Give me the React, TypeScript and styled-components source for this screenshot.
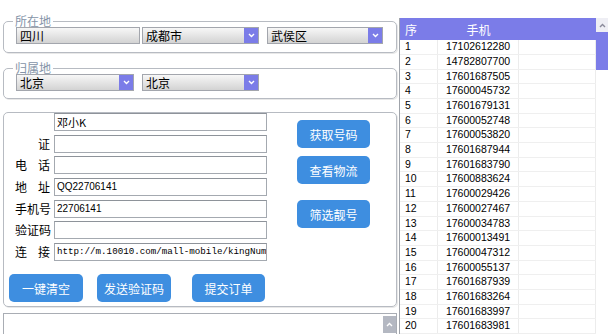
import React from "react";
import styled, { createGlobalStyle } from "styled-components";

const Global = createGlobalStyle`
  html, body { margin: 0; padding: 0; background: #fff; }
  body { font-family: "Noto Sans CJK SC", "Liberation Sans", sans-serif; font-size: 12px; color: #000; }
`;

const Page = styled.div`
  width: 608px;
  height: 334px;
  display: flex;
  overflow: hidden;
  background: #fff;
`;

const LeftPane = styled.div`
  width: 399px;
  flex: none;
  display: flex;
  flex-direction: column;
`;

const GroupBox = styled.fieldset<{ $mt: number; $pb: number }>`
  margin: ${(p) => p.$mt}px 0 0 3px;
  width: 394px;
  box-sizing: border-box;
  border: 1px solid #b7bbc2;
  border-radius: 5px;
  padding: 1px 0 ${(p) => p.$pb}px 12px;
  box-shadow: 1px 1px 0 #e8e8e8;
  min-width: 0;
`;

const Legend = styled.legend`
  font-size: 12px;
  line-height: 10px;
  color: #8594a8;
  padding: 0 2px;
  margin-left: -3px;
`;

const ComboRow = styled.div`
  display: flex;
  gap: 8px;
`;

const Combo = styled.div<{ $w: number; $mr?: number }>`
  width: ${(p) => p.$w}px;
  margin-right: ${(p) => p.$mr ?? 0}px;
  height: 17px;
  box-sizing: border-box;
  border: 1px solid #a3a6ad;
  background: linear-gradient(#f7f7f7, #d3d3d3);
  display: flex;
  align-items: stretch;
`;

const ComboText = styled.span`
  flex: 1;
  padding-left: 3px;
  font-size: 12px;
  line-height: 15px;
  white-space: nowrap;
  overflow: hidden;
`;

const ComboArrow = styled.span`
  width: 14px;
  flex: none;
  background: #7b7ce8;
  display: flex;
  align-items: center;
  justify-content: center;
`;

const FormBox = styled.div`
  margin: 13px 0 0 3px;
  width: 394px;
  box-sizing: border-box;
  border: 1px solid #b7bbc2;
  border-radius: 5px;
  box-shadow: 1px 1px 0 #e8e8e8;
  padding: 0 0 4px 6px;
  display: flex;
  flex-direction: column;
`;

const FormTop = styled.div`
  display: flex;
  align-items: flex-start;
`;

const Fields = styled.div`
  margin-left: 5px;
  display: flex;
  flex-direction: column;
  gap: 3.7px;
`;

const FieldRow = styled.div`
  display: flex;
  align-items: center;
  gap: 4px;
  height: 18px;
`;

const Label = styled.span<{ $right?: boolean }>`
  width: 35px;
  font-size: 12px;
  line-height: 14px;
  white-space: nowrap;
  text-align: ${(p) => (p.$right ? "right" : "justify")};
  text-align-last: ${(p) => (p.$right ? "right" : "justify")};
`;

const TextBox = styled.div<{ $kind?: "mono" | "sans" | "cjk" }>`
  width: 213px;
  height: 18px;
  box-sizing: border-box;
  border: 1px solid #a4a9b0;
  border-top-color: #8e939a;
  background: #fff;
  padding-left: 2px;
  font-family: ${(p) =>
    p.$kind === "mono"
      ? `"Liberation Mono", monospace`
      : p.$kind === "sans"
      ? `"Liberation Sans", Arial, sans-serif`
      : `"Noto Sans CJK SC", sans-serif`};
  font-size: ${(p) => (p.$kind === "mono" ? "9.2px" : p.$kind === "sans" ? "10px" : "11px")};
  line-height: 16px;
  white-space: nowrap;
  overflow: hidden;
`;

const SideButtons = styled.div`
  margin-left: 30px;
  padding-top: 7px;
  display: flex;
  flex-direction: column;
`;

const BlueButton = styled.button<{ $mt?: number; $ml?: number; $w?: number }>`
  margin: ${(p) => p.$mt ?? 0}px 0 0 ${(p) => p.$ml ?? 0}px;
  width: ${(p) => p.$w ?? 73}px;
  height: 28px;
  border: none;
  border-radius: 5px;
  background: #3e8ee0;
  color: #fff;
  font-family: "Noto Sans CJK SC", sans-serif;
  font-size: 12px;
  padding: 0;
  cursor: pointer;
`;

const BottomButtons = styled.div`
  display: flex;
  margin-top: 13px;
  margin-left: -1px;
`;

const LogPanel = styled.div`
  margin: 6px 0 0 3px;
  width: 394px;
  flex: 1;
  box-sizing: border-box;
  border: 1px solid #a9adb4;
  border-bottom: none;
  display: flex;
  justify-content: flex-end;
`;

const ScrollUp = styled.div`
  width: 13px;
  height: 17px;
  margin-top: 2px;
  background: #b4b8c2;
  display: flex;
  align-items: center;
  justify-content: center;
`;

const TablePane = styled.div`
  width: 209px;
  flex: none;
  padding-top: 18px;
  display: flex;
`;

const Grid = styled.div`
  width: 196px;
  border-left: 1px solid #9fa3aa;
  display: flex;
  flex-direction: column;
`;

const HeaderRow = styled.div`
  height: 24px;
  background: #7b7ce8;
  display: grid;
  grid-template-columns: 38px 81px 1fr;
  align-items: center;
  color: #fff;
  font-size: 12px;
`;

const HeadCell = styled.span<{ $center?: boolean }>`
  padding-left: ${(p) => (p.$center ? 0 : 5)}px;
  text-align: ${(p) => (p.$center ? "center" : "left")};
`;

const BodyRow = styled.div`
  height: 14.7px;
  box-sizing: border-box;
  display: grid;
  grid-template-columns: 38px 81px 1fr;
  border-bottom: 1px solid #efefef;
  font-family: "Liberation Sans", Arial, sans-serif;
  font-size: 10.5px;
  line-height: 13.7px;
`;

const Cell = styled.span<{ $center?: boolean }>`
  border-right: 1px solid #ececec;
  padding-left: ${(p) => (p.$center ? 0 : 5)}px;
  text-align: ${(p) => (p.$center ? "center" : "left")};
`;

const VScroll = styled.div`
  width: 12px;
  display: flex;
  flex-direction: column;
`;

const ScrollArrowBtn = styled.div`
  height: 14px;
  background: #eeeef4;
  display: flex;
  align-items: center;
  justify-content: center;
`;

const ScrollThumb = styled.div`
  height: 38px;
  background: #7b7ce8;
`;

const Chevron = ({ up, color }: { up?: boolean; color: string }) => (
  <svg width="7" height="5" viewBox="0 0 7 5">
    <path
      d={up ? "M1 4 L3.5 1.5 L6 4" : "M1 1 L3.5 3.5 L6 1"}
      fill="none"
      stroke={color}
      strokeWidth="1.4"
    />
  </svg>
);

const rows: [number, string][] = [
  [1, "17102612280"],
  [2, "14782807700"],
  [3, "17601687505"],
  [4, "17600045732"],
  [5, "17601679131"],
  [6, "17600052748"],
  [7, "17600053820"],
  [8, "17601687944"],
  [9, "17601683790"],
  [10, "17600883624"],
  [11, "17600029426"],
  [12, "17600027467"],
  [13, "17600034783"],
  [14, "17600013491"],
  [15, "17600047312"],
  [16, "17600055137"],
  [17, "17601687939"],
  [18, "17601683264"],
  [19, "17601683997"],
  [20, "17601683981"],
];

const Select = ({ w, text, arrow = true, mr }: { w: number; text: string; arrow?: boolean; mr?: number }) => (
  <Combo $w={w} $mr={mr}>
    <ComboText>{text}</ComboText>
    {arrow && (
      <ComboArrow>
        <Chevron color="#fff" />
      </ComboArrow>
    )}
  </Combo>
);

export default function App() {
  return (
    <Page>
      <Global />
      <LeftPane>
        <GroupBox $mt={16} $pb={8}>
          <Legend>所在地</Legend>
          <ComboRow>
            <Select w={124} mr={-6} text="四川" arrow={false} />
            <Select w={117} text="成都市" />
            <Select w={116} text="武侯区" />
          </ComboRow>
        </GroupBox>
        <GroupBox $mt={10} $pb={7}>
          <Legend>归属地</Legend>
          <ComboRow>
            <Select w={118} text="北京" />
            <Select w={117} text="北京" />
          </ComboRow>
        </GroupBox>
        <FormBox>
          <FormTop>
            <Fields>
              <FieldRow>
                <Label />
                <TextBox>邓小K</TextBox>
              </FieldRow>
              <FieldRow>
                <Label $right>证</Label>
                <TextBox />
              </FieldRow>
              <FieldRow>
                <Label>电话</Label>
                <TextBox />
              </FieldRow>
              <FieldRow>
                <Label>地址</Label>
                <TextBox $kind="sans">QQ22706141</TextBox>
              </FieldRow>
              <FieldRow>
                <Label>手机号</Label>
                <TextBox $kind="sans">22706141</TextBox>
              </FieldRow>
              <FieldRow>
                <Label>验证码</Label>
                <TextBox />
              </FieldRow>
              <FieldRow>
                <Label>连接</Label>
                <TextBox $kind="mono">http://m.10010.com/mall-mobile/kingNum</TextBox>
              </FieldRow>
            </Fields>
            <SideButtons>
              <BlueButton>获取号码</BlueButton>
              <BlueButton $mt={8}>查看物流</BlueButton>
              <BlueButton $mt={16}>筛选靓号</BlueButton>
            </SideButtons>
          </FormTop>
          <BottomButtons>
            <BlueButton $w={74}>一键清空</BlueButton>
            <BlueButton $w={74} $ml={14}>发送验证码</BlueButton>
            <BlueButton $ml={21}>提交订单</BlueButton>
          </BottomButtons>
        </FormBox>
        <LogPanel>
          <ScrollUp>
            <Chevron up color="#fff" />
          </ScrollUp>
        </LogPanel>
      </LeftPane>
      <TablePane>
        <Grid>
          <HeaderRow>
            <HeadCell>序</HeadCell>
            <HeadCell $center>手机</HeadCell>
            <HeadCell />
          </HeaderRow>
          {rows.map(([i, phone]) => (
            <BodyRow key={i}>
              <Cell>{i}</Cell>
              <Cell $center>{phone}</Cell>
              <Cell />
            </BodyRow>
          ))}
        </Grid>
        <VScroll>
          <ScrollArrowBtn>
            <Chevron up color="#8a8a9a" />
          </ScrollArrowBtn>
          <ScrollThumb />
        </VScroll>
      </TablePane>
    </Page>
  );
}
